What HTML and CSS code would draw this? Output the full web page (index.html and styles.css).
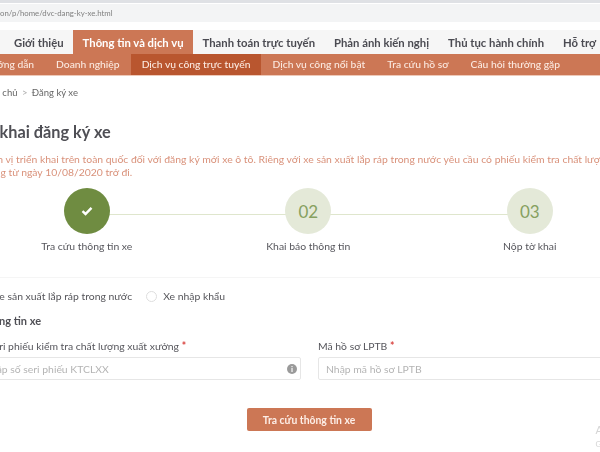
FILE: index.html
```html
<!DOCTYPE html>
<html lang="vi">
  <head>
    <meta charset="UTF-8" />
    <title>Đăng ký xe</title>
    <link rel="stylesheet" href="styles.css">
  </head>
  <body>
    <div class="shot">
      <div class="browser">
        <div class="address">on/p/home/dvc-dang-ky-xe.html</div>
      </div>
      <nav class="mainnav">
        <a>Giới thiệu</a>
        <a class="active">Thông tin và dịch vụ</a>
        <a>Thanh toán trực tuyến</a>
        <a>Phản ánh kiến nghị</a>
        <a>Thủ tục hành chính</a>
        <a>Hỗ trợ</a>
      </nav>
      <nav class="subnav">
        <a>Hướng dẫn</a>
        <a>Doanh nghiệp</a>
        <a class="active">Dịch vụ công trực tuyến</a>
        <a>Dịch vụ công nổi bật</a>
        <a>Tra cứu hồ sơ</a>
        <a>Câu hỏi thường gặp</a>
      </nav>
      <main class="content">
        <div class="crumb">Trang chủ <span>&gt;</span> Đăng ký xe</div>
        <h1>Tờ khai đăng ký xe</h1>
        <p class="notice">Đơn vị triển khai trên toàn quốc đối với đăng ký mới xe ô tô. Riêng với xe sản xuất lắp ráp trong nước yêu cầu có phiếu kiểm tra chất lượng xuất xưởng<br />dụng từ ngày 10/08/2020 trở đi.</p>
        <div class="steps">
          <div class="step done">
            <div class="circle">
              <svg width="12" height="10" viewBox="0 0 12 10"><path d="M1.5 5.2 4.5 8 10.5 1.8" fill="none" stroke="#fff" stroke-width="2.4" /></svg>
            </div>
            <div class="steplabel">Tra cứu thông tin xe</div>
          </div>
          <div class="step">
            <div class="circle">02</div>
            <div class="steplabel">Khai báo thông tin</div>
          </div>
          <div class="step">
            <div class="circle">03</div>
            <div class="steplabel">Nộp tờ khai</div>
          </div>
        </div>
        <div class="radios">
          <label><i class="radio"></i>Xe sản xuất lắp ráp trong nước</label>
          <label><i class="radio"></i>Xe nhập khẩu</label>
        </div>
        <h2>Thông tin xe</h2>
        <div class="fields">
          <div>
            <div class="fieldlabel">Số seri phiếu kiểm tra chất lượng xuất xưởng <b>*</b></div>
            <div class="input">
              <span>Nhập số seri phiếu KTCLXX</span>
              <i class="info">i</i>
            </div>
          </div>
          <div>
            <div class="fieldlabel">Mã hồ sơ LPTB <b>*</b></div>
            <div class="input"><span>Nhập mã hồ sơ LPTB</span></div>
          </div>
        </div>
        <div class="actions"><button>Tra cứu thông tin xe</button></div>
      </main>
      <div class="watermark">A<br /><small>G</small></div>
    </div>
  </body>
</html>
```

FILE: styles.css
```css
html,
body {
  margin: 0;
  height: 100%;
  overflow: hidden;
  background: #fff;
}

.shot {
  position: relative;
  width: 600px;
  height: 452px;
  overflow: hidden;
  font-family: Lato, "Open Sans", sans-serif;
  color: #4a4a4a;
  filter: blur(0.6px);
}

.browser {
  height: 30px;
  border-top: 3px solid #dfe1e5;
  box-sizing: border-box;
  padding-top: 1px;
}

.address {
  height: 18px;
  line-height: 18px;
  background: #f3f4f5;
  font-size: 7.8px;
  color: #808080;
  white-space: nowrap;
}

.mainnav {
  display: flex;
  height: 24px;
  padding-left: 4.5px;
  background: #f6f6f6;
  white-space: nowrap;
}

.mainnav a {
  padding: 0 9.5px;
  line-height: 25px;
  font-size: 11.3px;
  font-weight: 700;
  color: #4b4b52;
}

.mainnav a.active {
  background: #cc7755;
  color: #fff;
}

.subnav {
  display: flex;
  height: 21px;
  margin-left: -28px;
  width: 660px;
  background: #cc7755;
  border-bottom: 1px solid #eec9b8;
  white-space: nowrap;
}

.subnav a {
  padding: 0 11px;
  line-height: 21px;
  font-size: 10.3px;
  font-weight: 500;
  color: #fbe9e0;
}

.subnav a.active {
  background: #b9562f;
}

.content {
  width: 653px;
  margin-left: -17px;
}

.crumb {
  margin: 10px 0 0 -6px;
  line-height: 14px;
  font-size: 9.5px;
  color: #666;
}

.crumb span {
  color: #aaa;
  margin: 0 2px;
}

h1 {
  margin: 21px 0 0 -5px;
  line-height: 22px;
  font-size: 16.3px;
  font-weight: 700;
  color: #4f4f55;
}

.notice {
  margin: 10px 0 0;
  line-height: 13px;
  font-size: 10.4px;
  color: #d9917a;
  white-space: nowrap;
}

.steps {
  display: grid;
  grid-template-columns: repeat(3, 221.5px);
  margin: 9px 0 0 -7px;
  height: 89px;
  border-bottom: 1px solid #f5f5f5;
  width: 670px;
}

.step {
  position: relative;
  display: flex;
  flex-direction: column;
  align-items: center;
}

.step:not(:last-child)::after {
  content: "";
  position: absolute;
  top: 26px;
  left: 50%;
  width: 100%;
  height: 1px;
  background: #dfe6cd;
}

.circle {
  position: relative;
  z-index: 1;
  display: flex;
  align-items: center;
  justify-content: center;
  width: 46px;
  height: 46px;
  border-radius: 50%;
  background: #e4e9d8;
  color: #86a05f;
  font-size: 17px;
}

.done .circle {
  background: #6f8c41;
}

.steplabel {
  margin-top: 5px;
  line-height: 14px;
  font-size: 10.4px;
  color: #56565c;
}

.radios {
  display: flex;
  gap: 14px;
  align-items: center;
  margin-top: 9px;
  height: 18px;
  font-size: 10.4px;
  color: #55555a;
}

.radios label {
  display: flex;
  align-items: center;
  gap: 6px;
}

.radio {
  width: 9px;
  height: 9px;
  border: 1px solid #ddd;
  border-radius: 50%;
  margin-left: -7px;
}

.radios label + label .radio {
  margin-left: 0;
}

h2 {
  margin: 9px 0 0 -3px;
  line-height: 14px;
  font-size: 11px;
  font-weight: 700;
  color: #4f4f55;
}

.fields {
  display: grid;
  grid-template-columns: 326px 318px;
  gap: 17px;
  margin: 11px 0 0 -8px;
}

.fieldlabel {
  line-height: 14px;
  font-size: 10.4px;
  color: #56565c;
}

.fieldlabel b {
  color: #d9433f;
}

.input {
  display: flex;
  align-items: center;
  justify-content: space-between;
  box-sizing: border-box;
  height: 23px;
  margin-top: 4px;
  padding: 0 3px 0 7px;
  border: 1px solid #e6e6e6;
  border-radius: 2px;
  font-size: 10.4px;
  color: #b4b4b4;
}

.info {
  display: flex;
  align-items: center;
  justify-content: center;
  width: 10px;
  height: 10px;
  border-radius: 50%;
  background: #9a9a9a;
  color: #fff;
  font-size: 8px;
  font-weight: 700;
  font-style: normal;
}

.actions {
  width: 652px;
  display: flex;
  justify-content: center;
  margin-top: 28px;
}

button {
  width: 125px;
  height: 23px;
  padding: 0;
  border: 0;
  border-radius: 2px;
  background: #cc7755;
  color: #fdeee7;
  font-family: inherit;
  font-size: 10.4px;
  font-weight: 700;
}

.watermark {
  position: absolute;
  right: -3px;
  top: 423px;
  font-size: 11px;
  line-height: 13px;
  color: #d5d5d5;
}

.watermark small {
  font-size: 8px;
}
```
